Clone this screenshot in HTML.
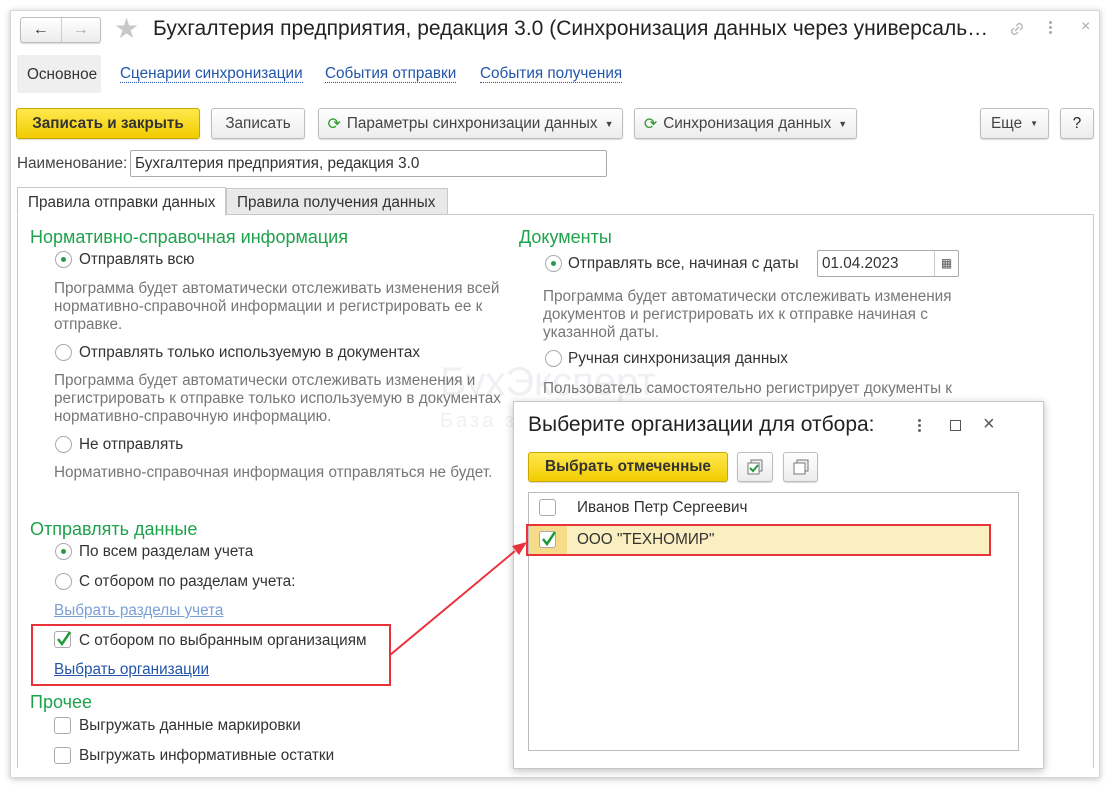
<!DOCTYPE html>
<html><head><meta charset="utf-8"><style>
*{box-sizing:border-box;margin:0;padding:0}
body{width:1110px;height:788px;background:#fff;position:relative;overflow:hidden;font-family:"Liberation Sans",Arial,sans-serif;font-size:15.3px;color:#333}
.a{position:absolute;white-space:nowrap}
.win{position:absolute;left:10px;top:10px;width:1090px;height:768px;background:#fff;border:1px solid #d8d8d8;box-shadow:0 1px 6px rgba(0,0,0,.25)}
.btn{position:absolute;border:1px solid #bdbdbd;border-radius:3px;background:linear-gradient(#fff,#ececec);box-shadow:0 1px 1px rgba(0,0,0,.15);display:flex;align-items:center;justify-content:center;color:#444;font-size:15.3px}
.yb{background:linear-gradient(#ffe84d,#f2cc00);border-color:#c9a800;font-weight:bold;color:#333}
.lnk{color:#2255aa;border-bottom:1px dotted #2255aa;line-height:16px}
.g{color:#1ea24b;font-size:18px}
.d{color:#777;font-size:15.3px}
.rad{position:absolute;width:17px;height:17px;border:1px solid #aaa;border-radius:50%;background:#fff}
.rad.on::after{content:"";position:absolute;left:5px;top:5px;width:5px;height:5px;border-radius:50%;background:#2a9a4a}
.cb{position:absolute;width:17px;height:17px;border:1px solid #aaa;border-radius:3px;background:#fff}
.inp{position:absolute;border:1px solid #aaa;border-radius:2px;background:#fff;padding-left:4px;display:flex;align-items:center;color:#333;font-size:15.3px}
</style></head><body>
<div class="win"></div>
<div class="btn" style="left:20px;top:17px;width:81px;height:26px;justify-content:flex-start"><span style="width:40px;text-align:center;font-size:16px;color:#333">&#8592;</span><span style="width:1px;height:24px;background:#ccc"></span><span style="width:39px;text-align:center;font-size:16px;color:#aaa">&#8594;</span></div>
<div class="a" style="left:114px;top:12px;font-size:28px;color:#c8c8c8">&#9733;</div>
<div class="a" style="left:153px;top:17px;font-size:21px;color:#222">Бухгалтерия предприятия, редакция 3.0 (Синхронизация данных через универсаль…</div>
<svg class="a" style="left:1007px;top:19px" width="20" height="20" viewBox="0 0 20 20"><g fill="none" stroke="#bbb" stroke-width="1.5"><path d="M8 12l4-4"/><path d="M9 7l2-2a3 3 0 0 1 4 4l-2 2"/><path d="M11 13l-2 2a3 3 0 0 1-4-4l2-2"/></g></svg>
<div class="a" style="left:1049px;top:21px;width:3px"><div style="width:3px;height:3px;background:#aaa;border-radius:50%;margin-bottom:2px"></div><div style="width:3px;height:3px;background:#aaa;border-radius:50%;margin-bottom:2px"></div><div style="width:3px;height:3px;background:#aaa;border-radius:50%"></div></div>
<div class="a" style="left:1081px;top:18px;font-size:16px;color:#aaa">×</div>
<div class="a" style="left:17px;top:55px;width:84px;height:38px;background:#efefef;border-radius:2px"></div>
<div class="a" style="left:27px;top:66px;color:#333">Основное</div>
<div class="a lnk" style="left:120px;top:66px">Сценарии синхронизации</div>
<div class="a lnk" style="left:325px;top:66px">События отправки</div>
<div class="a lnk" style="left:480px;top:66px">События получения</div>
<div class="btn yb" style="left:16px;top:108px;width:184px;height:31px">Записать и закрыть</div>
<div class="btn" style="left:211px;top:108px;width:94px;height:31px">Записать</div>
<div class="btn" style="left:318px;top:108px;width:305px;height:31px"><span style="color:#2a9a2a;font-size:16px;margin-right:6px">&#10227;</span>Параметры синхронизации данных<span style="font-size:9px;margin-left:7px">▼</span></div>
<div class="btn" style="left:634px;top:108px;width:223px;height:31px"><span style="color:#2a9a2a;font-size:16px;margin-right:6px">&#10227;</span>Синхронизация данных<span style="font-size:9px;margin-left:7px">▼</span></div>
<div class="btn" style="left:980px;top:108px;width:69px;height:31px">Еще<span style="font-size:8px;margin-left:8px">▼</span></div>
<div class="btn" style="left:1060px;top:108px;width:34px;height:31px;color:#222">?</div>
<div class="a" style="left:17px;top:155px;color:#444">Наименование:</div>
<div class="inp" style="left:130px;top:150px;width:477px;height:27px">Бухгалтерия предприятия, редакция 3.0</div>
<div class="a" style="left:17px;top:214px;width:1077px;height:554px;border:1px solid #c8c8c8;border-bottom:none"></div>
<div class="a" style="left:17px;top:187px;width:209px;height:29px;border:1px solid #c8c8c8;border-bottom:1px solid #fff;background:#fff;padding:6px 0 0 10px;color:#333">Правила отправки данных</div>
<div class="a" style="left:226px;top:188px;width:222px;height:27px;border:1px solid #c8c8c8;background:#e9e9e9;padding:5px 0 0 10px;color:#333">Правила получения данных</div>
<div class="a" style="left:440px;top:360px;font-size:40px;color:#eef0f3">БухЭксперт</div>
<div class="a" style="left:440px;top:410px;font-size:20px;color:#eef0f3;letter-spacing:3px">База зна</div>
<div class="a g" style="left:30px;top:227px">Нормативно-справочная информация</div>
<div class="rad on" style="left:55px;top:251px"></div><div class="a" style="left:79px;top:251px">Отправлять всю</div>
<div class="a d" style="left:54px;top:280px;line-height:18px">Программа будет автоматически отслеживать изменения всей<br>нормативно-справочной информации и регистрировать ее к<br>отправке.</div>
<div class="rad" style="left:55px;top:344px"></div><div class="a" style="left:79px;top:344px">Отправлять только используемую в документах</div>
<div class="a d" style="left:54px;top:372px;line-height:18px">Программа будет автоматически отслеживать изменения и<br>регистрировать к отправке только используемую в документах<br>нормативно-справочную информацию.</div>
<div class="rad" style="left:55px;top:436px"></div><div class="a" style="left:79px;top:436px">Не отправлять</div>
<div class="a d" style="left:54px;top:464px">Нормативно-справочная информация отправляться не будет.</div>
<div class="a g" style="left:30px;top:519px">Отправлять данные</div>
<div class="rad on" style="left:55px;top:543px"></div><div class="a" style="left:79px;top:543px">По всем разделам учета</div>
<div class="rad" style="left:55px;top:573px"></div><div class="a" style="left:79px;top:573px">С отбором по разделам учета:</div>
<div class="a" style="left:54px;top:602px;color:#7a9fd6;text-decoration:underline">Выбрать разделы учета</div>
<div class="cb" style="left:54px;top:631px"></div><svg class="a" style="left:54px;top:629px" width="20" height="20"><path d="M4 10l4 5 8-12" stroke="#1e9a3a" stroke-width="2.5" fill="none"/></svg>
<div class="a" style="left:79px;top:632px">С отбором по выбранным организациям</div>
<div class="a" style="left:54px;top:661px;color:#2255aa;text-decoration:underline">Выбрать организации</div>
<div class="a" style="left:31px;top:624px;width:360px;height:62px;border:2px solid #e8333b"></div>
<div class="a g" style="left:30px;top:692px">Прочее</div>
<div class="cb" style="left:54px;top:717px"></div><div class="a" style="left:79px;top:717px">Выгружать данные маркировки</div>
<div class="cb" style="left:54px;top:747px"></div><div class="a" style="left:79px;top:747px">Выгружать информативные остатки</div>
<div class="a g" style="left:519px;top:227px">Документы</div>
<div class="rad on" style="left:545px;top:255px"></div><div class="a" style="left:568px;top:255px">Отправлять все, начиная с даты</div>
<div class="inp" style="left:817px;top:250px;width:142px;height:27px">01.04.2023<span style="position:absolute;right:0;top:0;width:24px;height:25px;border-left:1px solid #ccc;text-align:center;font-size:12px;line-height:25px;color:#555">▦</span></div>
<div class="a d" style="left:543px;top:288px;line-height:18px">Программа будет автоматически отслеживать изменения<br>документов и регистрировать их к отправке начиная с<br>указанной даты.</div>
<div class="rad" style="left:545px;top:350px"></div><div class="a" style="left:568px;top:350px">Ручная синхронизация данных</div>
<div class="a d" style="left:543px;top:380px">Пользователь самостоятельно регистрирует документы к</div>
<div class="a" style="left:513px;top:401px;width:531px;height:368px;background:#fff;border:1px solid #c8c8c8;box-shadow:0 2px 8px rgba(0,0,0,.25)"></div>
<div class="a" style="left:528px;top:413px;font-size:21px;color:#222">Выберите организации для отбора:</div>
<div class="a" style="left:918px;top:419px;width:3px"><div style="width:3px;height:3px;background:#666;border-radius:50%;margin-bottom:2px"></div><div style="width:3px;height:3px;background:#666;border-radius:50%;margin-bottom:2px"></div><div style="width:3px;height:3px;background:#666;border-radius:50%"></div></div>
<div class="a" style="left:950px;top:420px;width:11px;height:11px;border:1.5px solid #555"></div>
<div class="a" style="left:983px;top:413px;font-size:20px;color:#555">×</div>
<div class="btn yb" style="left:528px;top:452px;width:200px;height:30px">Выбрать отмеченные</div>
<div class="btn" style="left:737px;top:452px;width:36px;height:30px"><svg width="18" height="18"><rect x="5" y="2" width="11" height="11" fill="#eee" stroke="#777"/><rect x="2" y="5" width="11" height="11" fill="#fff" stroke="#777"/><path d="M4 10l3 3 5-6" stroke="#1e9a3a" stroke-width="2" fill="none"/></svg></div>
<div class="btn" style="left:783px;top:452px;width:35px;height:30px"><svg width="18" height="18"><rect x="5" y="2" width="11" height="11" fill="#eee" stroke="#777"/><rect x="2" y="5" width="11" height="11" fill="#fff" stroke="#777"/></svg></div>
<div class="a" style="left:528px;top:492px;width:491px;height:259px;border:1px solid #bbb"></div>
<div class="cb" style="left:539px;top:499px"></div><div class="a" style="left:577px;top:499px">Иванов Петр Сергеевич</div>
<div class="a" style="left:529px;top:525px;width:461px;height:30px;background:#fbeec0"></div>
<div class="a" style="left:529px;top:525px;width:38px;height:30px;background:#f6dc8a"></div>
<div class="cb" style="left:539px;top:531px"></div><svg class="a" style="left:539px;top:529px" width="20" height="20"><path d="M4 10l4 5 8-12" stroke="#1e9a3a" stroke-width="2.5" fill="none"/></svg>
<div class="a" style="left:577px;top:531px">ООО "ТЕХНОМИР"</div>
<div class="a" style="left:526px;top:524px;width:465px;height:32px;border:2px solid #e8333b"></div>
<svg class="a" style="left:0;top:0" width="1110" height="788"><line x1="390" y1="655" x2="515" y2="551" stroke="#e8333b" stroke-width="2"/><path d="M527 542 L512 546 L519 555 Z" fill="#e8333b"/></svg>
</body></html>
